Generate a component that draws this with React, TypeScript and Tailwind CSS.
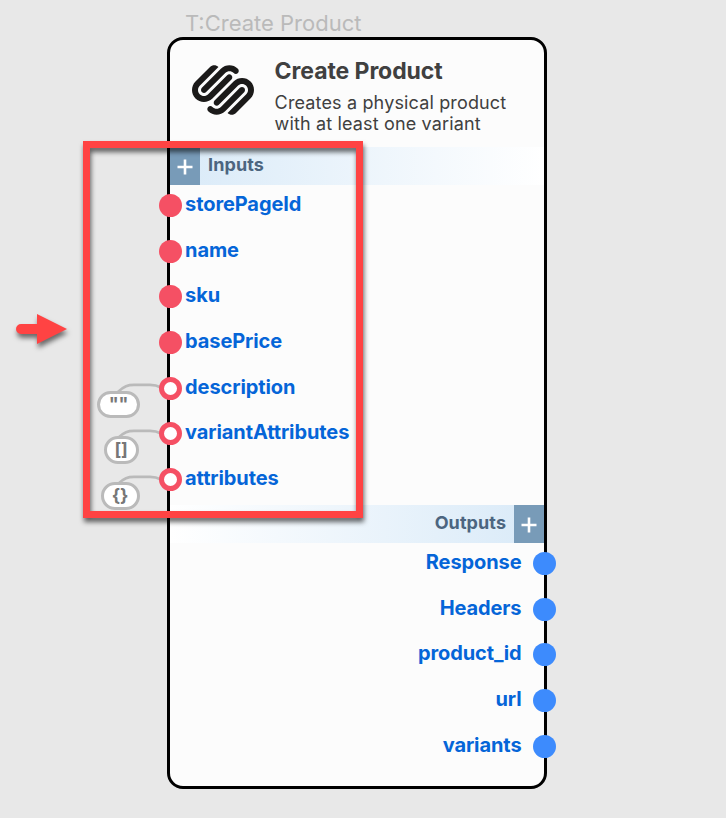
import { SiSquarespace } from "react-icons/si";

type Input = { name: string; fallback?: string; pill?: string };

const inputs: Input[] = [
  { name: "storePageId" },
  { name: "name" },
  { name: "sku" },
  { name: "basePrice" },
  { name: "description", fallback: '""', pill: "left-[-72.6px] w-[43px]" },
  { name: "variantAttributes", fallback: "[]", pill: "left-[-66px] w-[35px]" },
  { name: "attributes", fallback: "{}", pill: "left-[-69px] w-[39px]" },
];

const outputs = ["Response", "Headers", "product_id", "url", "variants"];

function AddButton() {
  return (
    <button className="flex h-full w-[30.4px] shrink-0 items-center justify-center bg-[#789bb8]">
      <svg width="16" height="16" viewBox="0 0 16 16" className="mt-[2px]" stroke="white" strokeWidth="2.6">
        <path d="M8 .5v15M.5 8h15" />
      </svg>
    </button>
  );
}

function InputRow({ name, fallback, pill }: Input) {
  return (
    <li className="relative flex h-[45.7px] items-center">
      {fallback && (
        <>
          <svg className="absolute left-[-55px] top-[17px]" width="52" height="16" fill="none" stroke="#bababa" strokeWidth="2.8">
            <path d="M3 10C9 4 13 2.9 19 2.9h16c5 0 8 1 11 2.5" />
          </svg>
          <span className={`absolute top-[25.3px] flex h-[27.5px] items-center justify-center rounded-full border-[3px] border-[#bababa] bg-white text-[18px] font-bold leading-none text-[#777] ${pill}`}>
            {fallback}
          </span>
        </>
      )}
      <span
        className={`relative ml-[-11px] size-[23px] shrink-0 rounded-full ${
          fallback ? "border-[5px] border-[#f55064] bg-white" : "bg-[#f55064]"
        }`}
      />
      <span className="relative top-[-1.5px] ml-[3.5px]">{name}</span>
    </li>
  );
}

function OutputRow({ name }: { name: string }) {
  return (
    <li className="flex h-[45.7px] items-center justify-end">
      <span className="relative top-[-1.5px] mr-[11.5px]">{name}</span>
      <span className="mr-[-12px] size-[23px] shrink-0 rounded-full bg-[#3d8bfd]" />
    </li>
  );
}

export default function App() {
  return (
    <main className="relative h-[818px] w-[726px] overflow-hidden bg-[#e8e8e8] pt-[9px] font-['Inter',sans-serif]">
      <div className="ml-[185px] h-[28.3px] text-[22px] leading-[28px] text-[#bababa]">T:Create Product</div>

      <section className="ml-[166.6px] h-[752px] w-[380.4px] rounded-[16px] border-[3px] border-black bg-[#fcfcfc]">
        <header className="flex h-[106.7px]">
          <SiSquarespace className="ml-[22.5px] mt-[18.6px] size-[62px] shrink-0 text-[#1b1a19]" />
          <div className="ml-[20.5px] pt-[16px] text-[#404040]">
            <h1 className="text-[23px] font-bold leading-[30px] tracking-[-0.07px]">Create Product</h1>
            <p className="mt-[6px] whitespace-nowrap text-[18px] leading-[21px] tracking-[0.15px]">
              Creates a physical product
              <br />
              with at least one variant
            </p>
          </div>
        </header>

        <div className="flex h-[38px] bg-gradient-to-r from-[#d9eaf8] to-white">
          <AddButton />
          <h2 className="ml-[8px] pt-[4px] text-[18px] font-bold leading-[27px] tracking-[0.1px] text-[#4c6580]">Inputs</h2>
        </div>
        <ul className="mt-[-2.3px] h-[322.3px] text-[20px] font-bold tracking-[-0.1px] text-[#0565d8]">
          {inputs.map((i) => (
            <InputRow key={i.name} {...i} />
          ))}
        </ul>

        <div className="flex h-[38px] justify-end bg-gradient-to-l from-[#d9eaf8] to-white">
          <h2 className="mr-[7.5px] pt-[4px] text-[18px] font-bold leading-[27px] tracking-[0.1px] text-[#4c6580]">Outputs</h2>
          <AddButton />
        </div>
        <ul className="mt-[-2.3px] text-[20px] font-bold tracking-[-0.1px] text-[#0565d8]">
          {outputs.map((o) => (
            <OutputRow key={o} name={o} />
          ))}
        </ul>
      </section>

      <div className="absolute left-[83px] top-[141px] h-[377px] w-[280px] border-[7px] border-[#ff4343] drop-shadow-[1px_4px_2.5px_rgba(0,0,0,0.6)]" />
      <svg className="absolute left-[10px] top-[308px] drop-shadow-[1px_4px_2.5px_rgba(0,0,0,0.55)]" width="62" height="44" fill="#ff4343">
        <path d="M11 16H27V6L57 21L27 36V26H11A5 5 0 0 1 11 16Z" />
      </svg>
    </main>
  );
}
